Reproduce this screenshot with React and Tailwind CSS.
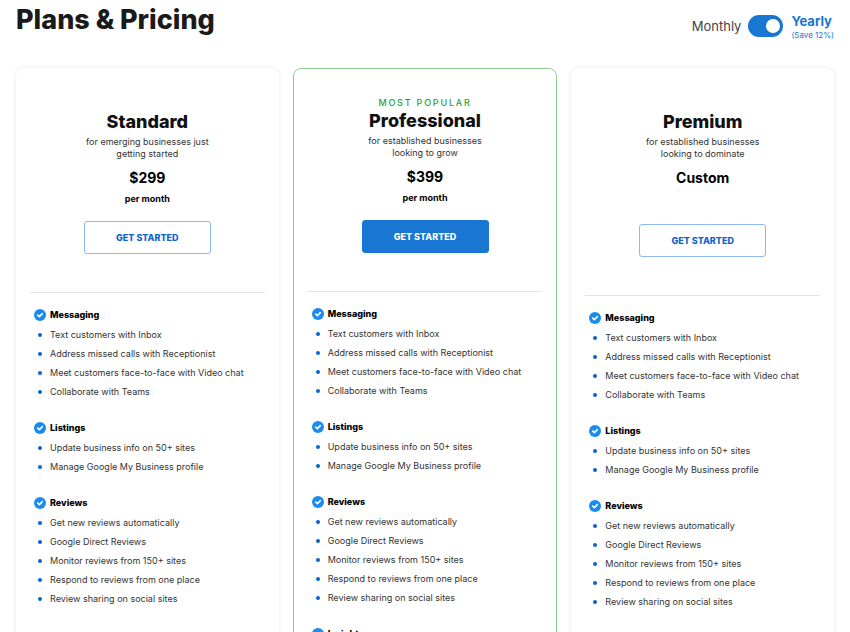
import { useState } from "react";
import clsx from "clsx";

const features = [
  {
    title: "Messaging",
    items: [
      "Text customers with Inbox",
      "Address missed calls with Receptionist",
      "Meet customers face-to-face with Video chat",
      "Collaborate with Teams",
    ],
  },
  {
    title: "Listings",
    items: [
      "Update business info on 50+ sites",
      "Manage Google My Business profile",
    ],
  },
  {
    title: "Reviews",
    items: [
      "Get new reviews automatically",
      "Google Direct Reviews",
      "Monitor reviews from 150+ sites",
      "Respond to reviews from one place",
      "Review sharing on social sites",
    ],
  },
];

const plans = [
  {
    id: "standard",
    name: "Standard",
    description: ["for emerging businesses just", "getting started"],
    price: "$299",
    period: "per month",
    features,
  },
  {
    id: "professional",
    name: "Professional",
    description: ["for established businesses", "looking to grow"],
    price: "$399",
    period: "per month",
    popular: true,
    features: [...features, { title: "Insights", items: [] }],
  },
  {
    id: "premium",
    name: "Premium",
    description: ["for established businesses", "looking to dominate"],
    price: "Custom",
    features,
  },
];

function CheckBadge() {
  return (
    <svg viewBox="0 0 12 12" className="size-3 shrink-0" aria-hidden="true">
      <circle cx="6" cy="6" r="6" fill="#1a8cf0" />
      <path
        d="M3.7 6.1 5.4 7.6 8.3 4.6"
        fill="none"
        stroke="#fff"
        strokeWidth="1.6"
        strokeLinecap="round"
        strokeLinejoin="round"
      />
    </svg>
  );
}

function BillingToggle({ yearly, onChange }) {
  return (
    <div className="flex items-center pt-[10px]">
      <label htmlFor="billing" className="text-[13px] leading-5 text-[#444]">
        Monthly
      </label>
      <input
        id="billing"
        type="checkbox"
        role="switch"
        checked={yearly}
        onChange={(e) => onChange(e.target.checked)}
        className="ml-[7px] flex h-[22px] w-[35px] shrink-0 cursor-pointer appearance-none items-center rounded-full bg-[#a3a3a3] px-[3px] before:size-3.5 before:rounded-full before:bg-white before:content-[''] checked:justify-end checked:bg-[#1976d2]"
      />
      <label htmlFor="billing" className="ml-2 pt-1 text-[#1976d2]">
        <span className="block text-[13px] leading-[14px] font-bold">
          Yearly
        </span>
        <span className="block text-[8px] leading-[14px]">(Save 12%)</span>
      </label>
    </div>
  );
}

function FeatureGroup({ title, items }) {
  return (
    <section>
      <h3 className="flex h-[21px] items-center gap-1 text-[9px] font-extrabold text-black">
        <CheckBadge />
        {title}
      </h3>
      <ul>
        {items.map((item) => (
          <li
            key={item}
            className="flex h-[19px] items-center gap-2 pl-1 text-[9px] whitespace-nowrap text-[#333]"
          >
            <span className="size-1 shrink-0 rounded-full bg-[#0b63d1]" />
            {item}
          </li>
        ))}
      </ul>
    </section>
  );
}

function PlanCard({ plan }) {
  return (
    <article
      className={clsx(
        "min-w-0 flex-1 rounded-lg bg-white px-[14px]",
        plan.popular
          ? "border border-[#8fce92]"
          : "shadow-[0_0_5px_rgba(0,0,0,0.09)]"
      )}
    >
      <div
        className={clsx(
          "flex flex-col items-center border-b border-[#e2e2e2] pb-[38px] text-center",
          plan.popular ? "pt-7" : "pt-[42px]"
        )}
      >
        {plan.popular && (
          <p className="text-[9px] leading-3 font-medium tracking-[0.2em] text-[#27a32d]">
            MOST POPULAR
          </p>
        )}
        <h2 className="text-lg leading-6 font-extrabold text-[#111]">
          {plan.name}
        </h2>
        <p className="mt-0.5 text-[9px] leading-3 text-[#333]">
          {plan.description.map((line) => (
            <span key={line} className="block">
              {line}
            </span>
          ))}
        </p>
        <p className="mt-2 text-sm leading-5 font-bold text-black">
          {plan.price}
        </p>
        <p className="mt-[3px] h-4 text-[9px] leading-4 font-bold text-black">
          {plan.period}
        </p>
        <button
          type="button"
          className={clsx(
            "h-[33px] w-[127px] cursor-pointer rounded-[3px] border text-[9px] font-extrabold",
            plan.period ? "mt-[14px]" : "mt-[17px]",
            plan.popular
              ? "border-[#1976d2] bg-[#1976d2] text-white"
              : "border-[#8db9ef] bg-white text-[#0b63d1]"
          )}
        >
          GET STARTED
        </button>
      </div>
      <div className="flex flex-col gap-4 px-1 py-[11px]">
        {plan.features.map((group) => (
          <FeatureGroup key={group.title} {...group} />
        ))}
      </div>
    </article>
  );
}

export default function App() {
  const [yearly, setYearly] = useState(true);

  return (
    <main className="flex h-screen flex-col overflow-hidden bg-white px-4 font-['Inter','Open_Sans',sans-serif]">
      <header className="flex h-[68px] shrink-0 items-start justify-between">
        <h1 className="pt-1 text-[27px] leading-8 font-extrabold text-[#1a1a1a]">
          Plans &amp; Pricing
        </h1>
        <BillingToggle yearly={yearly} onChange={setYearly} />
      </header>
      <div className="flex shrink-0 gap-[14px]">
        {plans.map((plan) => (
          <PlanCard key={plan.id} plan={plan} />
        ))}
      </div>
    </main>
  );
}
